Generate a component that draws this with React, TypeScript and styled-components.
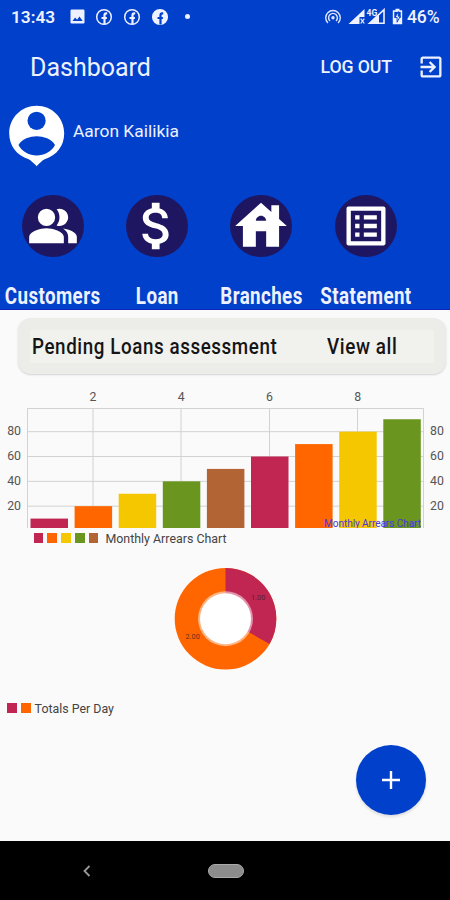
import React from 'react';
import styled, { createGlobalStyle } from 'styled-components';

const GlobalStyle = createGlobalStyle`
  * { box-sizing: border-box; }
  body { margin: 0; background: #fafafa; font-family: Roboto, "Liberation Sans", sans-serif; }
`;

const BLUE = '#0040cb';
const CRIMSON = '#c12552';
const ORANGE = '#ff6600';
const YELLOW = '#f5c700';
const GREEN = '#6a961f';
const BROWN = '#b36435';
const PALETTE = [CRIMSON, ORANGE, YELLOW, GREEN, BROWN];

const Screen = styled.div`
  width: 450px;
  height: 900px;
  display: flex;
  flex-direction: column;
  overflow: hidden;
  background: #fafafa;
`;

const Header = styled.header`
  height: 310px;
  flex: none;
  display: flex;
  flex-direction: column;
  background: ${BLUE};
  border-bottom: 1px solid #0928b8;
  color: #eef1ff;
`;

const StatusBar = styled.div`
  height: 33px;
  flex: none;
  display: flex;
  align-items: center;
  padding: 0 10px 0 11px;
  font-size: 17.3px;
  font-weight: 600;
`;

const Clock = styled.span`
  width: 59px;
`;

const StatusIcons = styled.div`
  display: flex;
  align-items: center;
  gap: 10px;
  flex: 1;
`;

const SystemIcons = styled.div`
  display: flex;
  align-items: center;
  gap: 6px;
`;

const Battery = styled.span`
  width: 33px;
  font-weight: 500;
  font-size: 17.5px;
  letter-spacing: -0.1px;
  margin-left: -2px;
`;

const Dot = styled.span`
  width: 5px;
  height: 5px;
  margin-left: 6px;
  border-radius: 50%;
  background: currentColor;
`;

const AppBar = styled.div`
  height: 68px;
  flex: none;
  display: flex;
  align-items: center;
  padding: 0 5px 0 30px;
`;

const Title = styled.h1`
  margin: 0;
  flex: 1;
  font-size: 25px;
  font-weight: 400;
`;

const LogOut = styled.button`
  border: 0;
  padding: 0;
  margin-right: 25px;
  background: none;
  color: inherit;
  font: 500 17.7px Roboto, sans-serif;
  letter-spacing: -0.1px;
`;

const Profile = styled.div`
  height: 68px;
  flex: none;
  display: flex;
  padding: 4px 0 0 8px;
  gap: 8px;
`;

const UserName = styled.span`
  padding-top: 15px;
  font-size: 17.4px;
  line-height: 22px;
`;

const Menu = styled.nav`
  flex: none;
  display: grid;
  grid-template-columns: repeat(4, 104.3px);
  padding: 26px 0 0 0.5px;
`;

const MenuItem = styled.div`
  display: flex;
  flex-direction: column;
  align-items: center;
`;

const IconDisc = styled.div`
  width: 62px;
  height: 62px;
  display: flex;
  align-items: center;
  justify-content: center;
  border-radius: 50%;
  background: #1e1660;
  color: #fff;
`;

const CondensedText = styled.span<{ $size: number; $weight: number; $scale: number; $spacing: number; $origin?: string }>`
  display: inline-block;
  font-size: ${(p) => p.$size}px;
  font-weight: ${(p) => p.$weight};
  letter-spacing: ${(p) => p.$spacing}px;
  line-height: 24px;
  white-space: nowrap;
  transform: scaleX(${(p) => p.$scale});
  transform-origin: ${(p) => p.$origin ?? 'center'};
`;

const MenuLabel = styled.div`
  margin-top: 28px;
  height: 24px;
  display: flex;
  justify-content: center;
`;

const Content = styled.main`
  flex: 1;
  display: flex;
  flex-direction: column;
`;

const PendingCard = styled.section`
  height: 56px;
  margin: 8px 4px 0 18px;
  padding: 12px 12px 11px;
  border-radius: 13px;
  background: #ecece9;
  box-shadow: 0 1px 2px rgba(0, 0, 0, 0.16);
`;

const PendingInner = styled.div`
  height: 33px;
  display: flex;
  align-items: center;
  padding-bottom: 1px;
  background: #f1f1ee;
  color: #151515;
`;

const PendingTitle = styled.div`
  width: 297px;
  display: flex;
  padding-left: 2px;
`;

const Chart = styled.svg`
  display: block;
  width: 450px;
  flex: none;
  font-family: Roboto, sans-serif;
`;

const Legend = styled.div<{ $indent: number }>`
  height: 20px;
  display: flex;
  align-items: center;
  gap: 4px;
  padding-left: ${(p) => p.$indent}px;
  font-size: 12.4px;
  color: #444;
`;

const Swatch = styled.span<{ $color: string }>`
  width: 9.8px;
  height: 10px;
  background: ${(p) => p.$color};
`;

const LegendText = styled.span<{ $gap: number }>`
  margin-left: ${(p) => p.$gap}px;
`;

const FabRow = styled.div`
  display: flex;
  justify-content: flex-end;
  padding: 27px 24.5px 0 0;
`;

const Fab = styled.button`
  width: 70px;
  height: 70px;
  display: flex;
  align-items: center;
  justify-content: center;
  padding: 0;
  border: 0;
  border-radius: 50%;
  background: ${BLUE};
  box-shadow: 0 2px 3px rgba(0, 0, 0, 0.12);
`;

const NavBar = styled.footer`
  height: 59px;
  flex: none;
  display: flex;
  align-items: center;
  padding-left: 81px;
  background: #000;
`;

const HomePill = styled.span`
  width: 36px;
  height: 14px;
  margin-left: 115px;
  border: 1px solid #aaa;
  border-radius: 7px;
  background: #8c8c8c;
`;

const Glyph = ({ d, size }: { d: string; size: number }) => (
  <svg width={size} height={size} viewBox="0 0 24 24" fill="currentColor">
    <path d={d} />
  </svg>
);

const PEOPLE =
  'M16.67 13.13C18.04 14.06 19 15.32 19 17v3h4v-3c0-2.18-3.57-3.47-6.33-3.87zM9 4a4 4 0 1 0 0 8a4 4 0 1 0 0-8zM15 12c2.21 0 4-1.79 4-4s-1.79-4-4-4c-.47 0-.91.1-1.33.24C14.5 5.27 15 6.58 15 8s-.5 2.73-1.33 3.76c.42.14.86.24 1.33.24zM9 13c-2.67 0-8 1.34-8 4v3h16v-3c0-2.66-5.33-4-8-4z';
const MONEY =
  'M11.8 10.9c-2.27-.59-3-1.2-3-2.15 0-1.09 1.01-1.85 2.7-1.85 1.78 0 2.44.85 2.5 2.1h2.21c-.07-1.72-1.12-3.3-3.21-3.81V3h-3v2.16c-1.94.42-3.5 1.68-3.5 3.61 0 2.31 1.91 3.46 4.7 4.13 2.5.6 3 1.48 3 2.41 0 .69-.49 1.79-2.7 1.79-2.06 0-2.87-.92-2.98-2.1h-2.2c.12 2.19 1.76 3.42 3.68 3.83V21h3v-2.15c1.95-.37 3.5-1.5 3.5-3.55 0-2.84-2.43-3.81-4.7-4.4z';
const HOUSE =
  'M19 9.3V4h-3v2.6L12 3 2 12h3v8h5v-6h4v6h5v-8h3l-3-2.7zm-9 .7c0-1.1.9-2 2-2s2 .9 2 2h-4z';
const LIST =
  'M19 5v14H5V5h14m1.1-2H3.9c-.5 0-.9.4-.9.9v16.2c0 .4.4.9.9.9h16.2c.4 0 .9-.5.9-.9V3.9c0-.5-.5-.9-.9-.9zM11 7h6v2h-6V7zm0 4h6v2h-6v-2zm0 4h6v2h-6zM7 7h2v2H7zm0 4h2v2H7zm0 4h2v2H7z';
const EXIT =
  'M10.09 15.59L11.5 17l5-5-5-5-1.41 1.41L12.67 11H3v2h9.67l-2.58 2.59zM19 3H5c-1.11 0-2 .9-2 2v4h2V5h14v14H5v-4H3v4c0 1.1.89 2 2 2h14c1.1 0 2-.9 2-2V5c0-1.1-.9-2-2-2z';

const PictureIcon = () => (
  <svg width="15" height="15" viewBox="0 0 15 15">
    <rect x="0.5" y="0.5" width="14" height="14" rx="1.2" fill="#eef1ff" />
    <path d="M2.5 12l2.6-3.5 2 2.2 2.4-3.1 3.2 4.4z" fill={BLUE} />
  </svg>
);

const SocialIcon = ({ filled }: { filled?: boolean }) => (
  <svg width="18" height="18" viewBox="0 0 18 18" fill="none">
    <circle cx="9" cy="9" r="7.3" stroke="#eef1ff" strokeWidth="1.5" fill={filled ? '#eef1ff' : 'none'} />
    <path
      d="M12.2 5.3H11.2q-1.7 0-1.7 1.9V16.4M6.5 10h5.4"
      stroke={filled ? BLUE : '#eef1ff'}
      strokeWidth="2.2"
    />
  </svg>
);

const HotspotIcon = () => (
  <svg width="18" height="16" viewBox="0 0 18 16" fill="none" stroke="#dfe5ff" strokeWidth="1.4">
    <path d="M3.9 14A7.3 7.3 0 1 1 14.1 14M6 12a4.4 4.4 0 1 1 6 0" />
    <circle cx="9" cy="8.8" r="1.7" fill="#dfe5ff" stroke="none" />
  </svg>
);

const SignalIcons = () => (
  <svg width="38" height="18" viewBox="0 0 38 18">
    <path d="M0.5 16L16.5 1v8h-5v7z" fill="#eef1ff" />
    <path d="M12.7 10.7l3.6 4.8M16.3 10.7l-3.6 4.8" stroke="#eef1ff" strokeWidth="1.2" />
    <path d="M21.5 15.3L36 1.7v13.6z" fill="none" stroke="#eef1ff" strokeWidth="1.6" />
    <path d="M21 16l10-9.3V16z" fill="#eef1ff" />
    <text x="18.5" y="7.5" fontSize="8.5" fontWeight="700" fill="#eef1ff" fontFamily="Roboto, sans-serif">
      4G
    </text>
  </svg>
);

const BatteryIcon = () => (
  <svg width="11" height="17" viewBox="0 0 11 17">
    <path d="M3.5 0.7h4v1.6h2.7v14H0.8v-14h2.7z" fill="#eef1ff" />
    <path d="M2.3 3.9h6.4v6H2.3z" fill={BLUE} />
    <path d="M6.4 3.6L3 9.4h2.1v4.8l3.2-6H6.2z" fill="#eef1ff" stroke={BLUE} strokeWidth="0.9" />
  </svg>
);

const AvatarIcon = () => (
  <svg width="57" height="62" viewBox="0 0 57 62">
    <path
      d="M28.7 0.7C13.5 0.7 1.2 12.6 1.2 28.3c0 12.6 7.5 22.3 19.5 25.9 1.6.7 6.1 4.8 8 7 2-2.2 6-6.3 8-7C48.7 50.6 56.2 41 56.2 28.3 56.2 12.6 43.9.7 28.7.7z"
      fill="#fff"
    />
    <circle cx="28.6" cy="15.8" r="9.1" fill={BLUE} />
    <path d="M10.5 40C14 34 22 31.3 28.7 31.3S43.5 34 47 40C43.5 47 36 50.4 28.7 50.4S14 47 10.5 40z" fill={BLUE} />
  </svg>
);

const MENU = [
  { label: 'Customers', d: PEOPLE, size: 52 },
  { label: 'Loan', d: MONEY, size: 62 },
  { label: 'Branches', d: HOUSE, size: 62 },
  { label: 'Statement', d: LIST, size: 52 },
];

const VALUES = [10, 20, 30, 40, 50, 60, 70, 80, 90];
const TICKS = [20, 40, 60, 80];
// Vertical position of a value inside the bar chart.
const yOf = (v: number) => 155 - v * 1.2417;

const BarChart = () => (
  <Chart height="154" viewBox="0 0 450 154">
    <g stroke="#d2d2d2" strokeWidth="1">
      {[93, 181, 269.5, 357.5].map((x) => (
        <line key={x} x1={x} x2={x} y1="35" y2="154" />
      ))}
      {TICKS.map((t) => (
        <line key={t} x1="28" x2="423.5" y1={yOf(t) + 2} y2={yOf(t) + 2} />
      ))}
      <path d="M27.5 154V34.5H423.5V154" fill="none" />
    </g>
    {VALUES.map((v, i) => (
      <rect
        key={v}
        x={30.5 + i * 44.1}
        y={yOf(v) + 2}
        width="37.5"
        height={152 - yOf(v)}
        fill={PALETTE[i % 5]}
      />
    ))}
    <g fontSize="12.3" fill="#555">
      {[2, 4, 6, 8].map((n) => (
        <text key={n} x={93 + (n / 2 - 1) * 88.2} y="27" textAnchor="middle">
          {n}
        </text>
      ))}
      {TICKS.map((t) => (
        <React.Fragment key={t}>
          <text x="21" y={yOf(t) + 5.8} textAnchor="end">{t}</text>
          <text x="430" y={yOf(t) + 5.8}>{t}</text>
        </React.Fragment>
      ))}
    </g>
    <text x="324" y="152.5" fontSize="10.2" textLength="97" fill="#4a35e0">
      Monthly Arrears Chart
    </text>
  </Chart>
);

const PieChart = () => (
  <Chart height="150" viewBox="0 0 450 150">
    <circle cx="225.5" cy="70.7" r="50.8" fill={ORANGE} />
    <path d="M225.5 70.7V19.9A50.8 50.8 0 0 1 269.5 96.1Z" fill={CRIMSON} />
    <circle cx="225.5" cy="70.7" r="27.5" fill="#fff" fillOpacity="0.5" />
    <circle cx="225.5" cy="70.7" r="25.5" fill="#fff" />
    <g fontSize="7.3" fill="#3a2020" fillOpacity="0.8">
      <text x="251" y="52">1.00</text>
      <text x="185.5" y="90.5">2.00</text>
    </g>
  </Chart>
);

export default function App() {
  return (
    <Screen>
      <GlobalStyle />
      <Header>
        <StatusBar>
          <Clock>13:43</Clock>
          <StatusIcons>
            <PictureIcon />
            <SocialIcon />
            <SocialIcon />
            <SocialIcon filled />
            <Dot />
          </StatusIcons>
          <SystemIcons>
            <HotspotIcon />
            <SignalIcons />
            <BatteryIcon />
            <Battery>46%</Battery>
          </SystemIcons>
        </StatusBar>
        <AppBar>
          <Title>Dashboard</Title>
          <LogOut>LOG OUT</LogOut>
          <Glyph d={EXIT} size={28} />
        </AppBar>
        <Profile>
          <AvatarIcon />
          <UserName>Aaron Kailikia</UserName>
        </Profile>
        <Menu>
          {MENU.map((m) => (
            <MenuItem key={m.label}>
              <IconDisc>
                <Glyph d={m.d} size={m.size} />
              </IconDisc>
              <MenuLabel>
                <CondensedText $size={23} $weight={700} $scale={0.815} $spacing={0.5}>
                  {m.label}
                </CondensedText>
              </MenuLabel>
            </MenuItem>
          ))}
        </Menu>
      </Header>
      <Content>
        <PendingCard>
          <PendingInner>
            <PendingTitle>
              <CondensedText $size={22.5} $weight={500} $scale={0.835} $spacing={0.7} $origin="left">
                Pending Loans assessment
              </CondensedText>
            </PendingTitle>
            <CondensedText $size={22.5} $weight={500} $scale={0.84} $spacing={0.7} $origin="left">
              View all
            </CondensedText>
          </PendingInner>
        </PendingCard>
        <BarChart />
        <Legend $indent={33.5}>
          {PALETTE.map((c) => (
            <Swatch key={c} $color={c} />
          ))}
          <LegendText $gap={3}>Monthly Arrears Chart</LegendText>
        </Legend>
        <PieChart />
        <Legend $indent={7}>
          <Swatch $color={CRIMSON} />
          <Swatch $color={ORANGE} />
          <LegendText $gap={0}>Totals Per Day</LegendText>
        </Legend>
        <FabRow>
          <Fab aria-label="Add">
            <svg width="20" height="20" viewBox="0 0 20 20" stroke="#fff" strokeWidth="2.4">
              <path d="M1 10h18M10 1v18" />
            </svg>
          </Fab>
        </FabRow>
      </Content>
      <NavBar>
        <svg width="12" height="14" viewBox="0 0 12 14" fill="none" stroke="#999" strokeWidth="1.8">
          <path d="M8.5 2L3.5 7l5 5" />
        </svg>
        <HomePill />
      </NavBar>
    </Screen>
  );
}
